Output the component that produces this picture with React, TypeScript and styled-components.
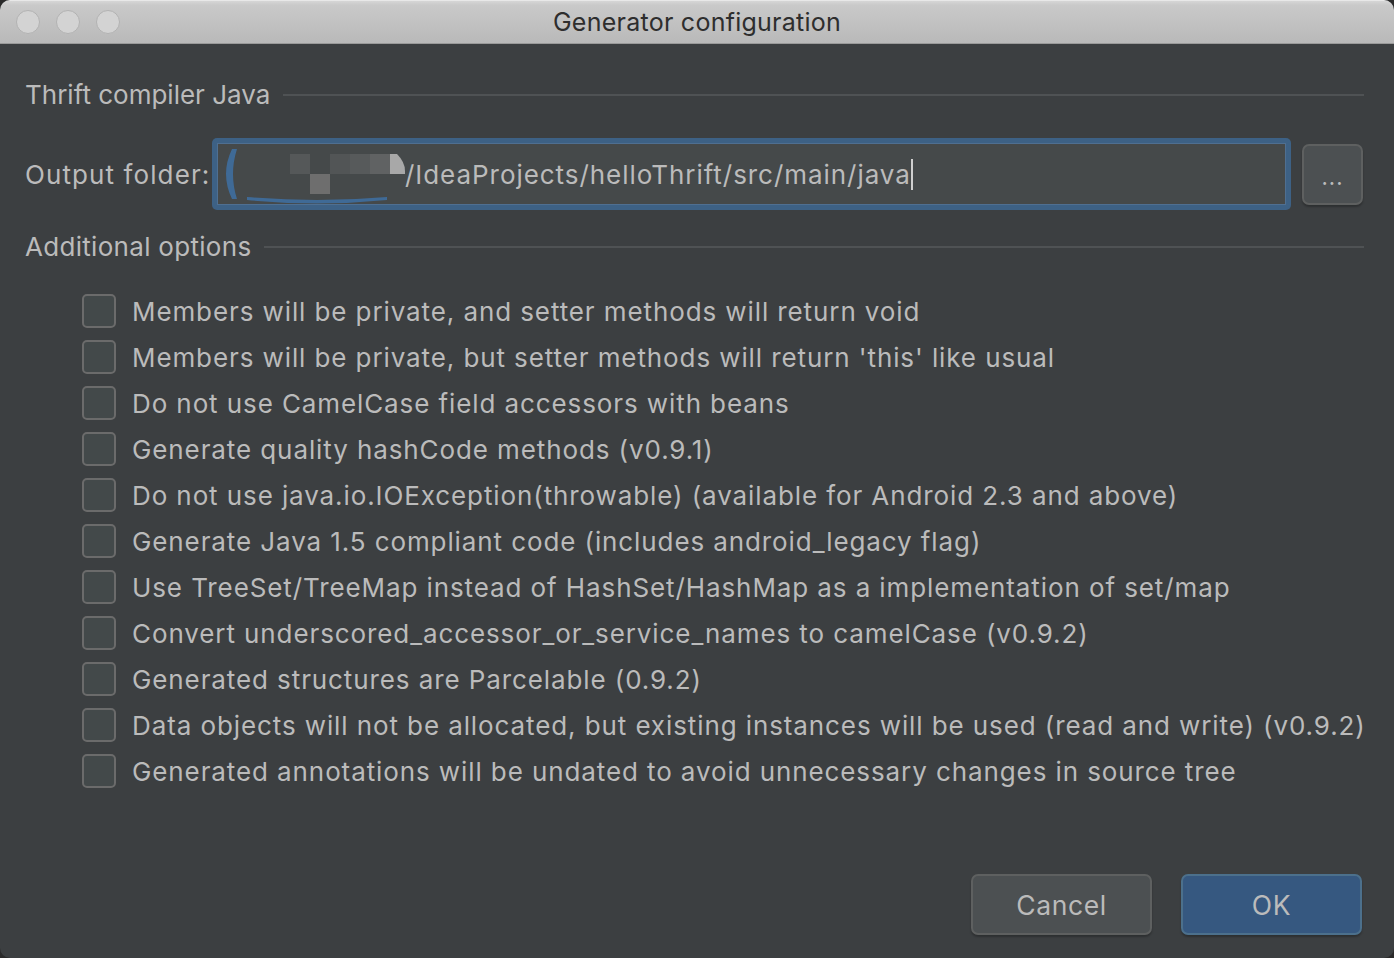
import React from "react";
import styled, { createGlobalStyle } from "styled-components";

const Global = createGlobalStyle`
  html, body { margin: 0; padding: 0; background: #2a2a2a; }
  body { font-family: Inter, "Open Sans", "Liberation Sans", sans-serif; }
  * { box-sizing: border-box; }
`;

const Window = styled.div`
  width: 1394px;
  height: 958px;
  background: #3c3f41;
  border-radius: 10px;
  overflow: hidden;
  display: flex;
  flex-direction: column;
`;

const TitleBar = styled.div`
  height: 44px;
  flex: none;
  background: linear-gradient(#d6d6d6, #c9c9c9 10%, #b9b9b9);
  border-top: 1px solid #e8e8e8;
  border-bottom: 1px solid #9a9a9a;
  display: flex;
  align-items: center;
  position: relative;
  padding-left: 16px;
`;

const Lights = styled.div`
  display: flex;
  gap: 16px;
`;

const Light = styled.div`
  width: 24px;
  height: 24px;
  border-radius: 50%;
  background: #d3d3d3;
  border: 1px solid #b2b2b2;
`;

const Title = styled.div`
  position: absolute;
  left: 0;
  right: 0;
  text-align: center;
  font-size: 25px;
  color: #2e2e2e;
  letter-spacing: 0.25px;
`;

const Body = styled.div`
  flex: 1;
  display: flex;
  flex-direction: column;
  padding: 34px 30px 23px 25px;
  color: #bbbbbb;
  font-size: 26px;
`;

const Section = styled.div<{ $spacing?: number; $top?: number }>`
  display: flex;
  align-items: center;
  gap: 13px;
  height: 32px;
  margin-top: ${(p) => p.$top ?? 0}px;
  letter-spacing: ${(p) => p.$spacing ?? 0}px;
  &::after {
    content: "";
    flex: 1;
    height: 2px;
    background: #4f5254;
    margin-top: 2px;
  }
`;

const FolderRow = styled.div`
  display: flex;
  align-items: center;
  margin-top: 28px;
  height: 72px;
`;

const Label = styled.span`
  width: 187px;
  flex: none;
  letter-spacing: 1.1px;
`;

const Field = styled.div`
  flex: 1;
  height: 72px;
  border-radius: 5px;
  background: #3d6185;
  padding: 5px;
  display: flex;
`;

const FieldInner = styled.div`
  flex: 1;
  background: #45494a;
  border: 1px solid #4f6f91;
  display: flex;
  align-items: center;
  padding-left: 4px;
  font-size: 26px;
  letter-spacing: 0.95px;
  color: #bbbbbb;
`;

const Caret = styled.span`
  display: inline-block;
  width: 2px;
  height: 31px;
  background: #cfcfcf;
  margin-left: 0px;
`;

const Browse = styled.button`
  width: 61px;
  height: 61px;
  margin-left: 11px;
  margin-right: 1px;
  border-radius: 7px;
  background: #4c5052;
  border: 2px solid #5e6060;
  box-shadow: 0 2px 2px rgba(0,0,0,0.25);
  color: #bbbbbb;
  font-family: inherit;
  font-size: 22px;
  padding-top: 6px;
  letter-spacing: 1px;
`;

const Options = styled.div`
  display: flex;
  flex-direction: column;
  gap: 14px;
  margin-top: 33px;
  padding-left: 57px;
`;

const OptionRow = styled.label`
  display: flex;
  align-items: center;
  gap: 16px;
  height: 32px;
  white-space: nowrap;
  letter-spacing: 0.9px;
`;

const Box = styled.span`
  width: 34px;
  height: 34px;
  flex: none;
  border: 2px solid #6b6b6b;
  border-radius: 5px;
  background: #43494a;
`;

const Footer = styled.div`
  margin-top: auto;
  display: flex;
  justify-content: flex-end;
  gap: 29px;
  margin-right: 2px;
`;

const DialogButton = styled.button<{ $primary?: boolean }>`
  width: 181px;
  height: 61px;
  border-radius: 7px;
  font-family: inherit;
  font-size: 26.5px;
  letter-spacing: 0.6px;
  color: #bbbbbb;
  background: ${(p) => (p.$primary ? "#365880" : "#4c5052")};
  border: 2px solid ${(p) => (p.$primary ? "#4c708c" : "#5e6060")};
  box-shadow: 0 2px 2px rgba(0,0,0,0.25);
`;

const options = [
  "Members will be private, and setter methods will return void",
  "Members will be private, but setter methods will return 'this' like usual",
  "Do not use CamelCase field accessors with beans",
  "Generate quality hashCode methods (v0.9.1)",
  "Do not use java.io.IOException(throwable) (available for Android 2.3 and above)",
  "Generate Java 1.5 compliant code (includes android_legacy flag)",
  "Use TreeSet/TreeMap instead of HashSet/HashMap as a implementation of set/map",
  "Convert underscored_accessor_or_service_names to camelCase (v0.9.2)",
  "Generated structures are Parcelable (0.9.2)",
  "Data objects will not be allocated, but existing instances will be used (read and write) (v0.9.2)",
  "Generated annotations will be undated to avoid unnecessary changes in source tree",
];

const Redacted = () => (
  <svg width="183" height="60" viewBox="0 0 183 60" style={{ flex: "none" }}>
    <path d="M10 5 Q-2 30 10 55 L15 55 Q7 30 15 5 Z" fill="#3f6a96" />
    <path d="M25 56 Q95 63 165 56 L165 53 Q95 59 25 53 Z" fill="#3f6a96" />
    <rect x="68" y="10" width="20" height="20" fill="#555859" />
    <rect x="88" y="30" width="20" height="20" fill="#6e6e6e" />
    <rect x="108" y="10" width="20" height="20" fill="#525556" />
    <rect x="128" y="10" width="20" height="20" fill="#575a5b" />
    <rect x="148" y="10" width="20" height="20" fill="#606263" />
    <path d="M168 10 L175 10 Q183 18 183 27 L183 30 L168 30 Z" fill="#a8a8a8" />
  </svg>
);

export default function App() {
  return (
    <>
      <Global />
      <Window>
        <TitleBar>
          <Lights>
            <Light />
            <Light />
            <Light />
          </Lights>
          <Title>Generator configuration</Title>
        </TitleBar>
        <Body>
          <Section>Thrift compiler Java</Section>
          <FolderRow>
            <Label>Output folder:</Label>
            <Field>
              <FieldInner>
                <Redacted />
                /IdeaProjects/helloThrift/src/main/java
                <Caret />
              </FieldInner>
            </Field>
            <Browse>...</Browse>
          </FolderRow>
          <Section $top={20} $spacing={0.3}>Additional options</Section>
          <Options>
            {options.map((o) => (
              <OptionRow key={o}>
                <Box />
                {o}
              </OptionRow>
            ))}
          </Options>
          <Footer>
            <DialogButton>Cancel</DialogButton>
            <DialogButton $primary>OK</DialogButton>
          </Footer>
        </Body>
      </Window>
    </>
  );
}
